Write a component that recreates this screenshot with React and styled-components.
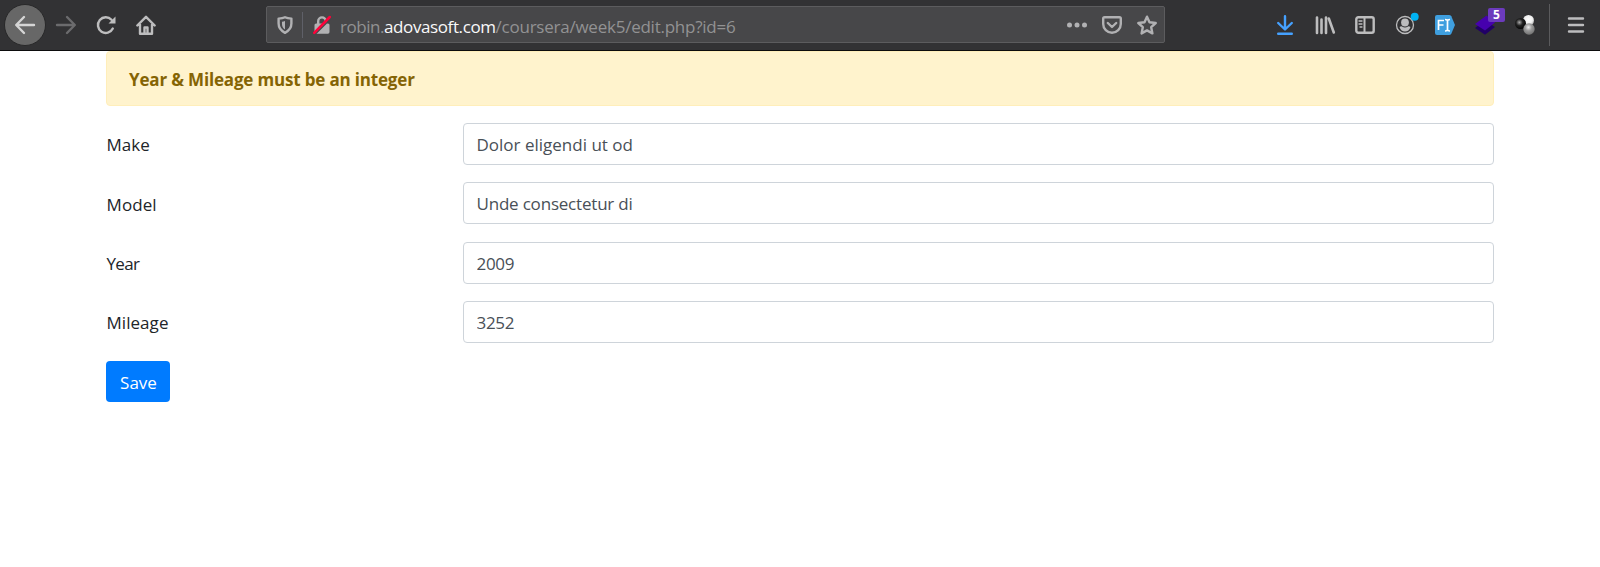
import React from "react";
import styled, { createGlobalStyle } from "styled-components";

const GlobalStyle = createGlobalStyle`
  *, *::before, *::after { box-sizing: border-box; }
  body {
    margin: 0;
    background: #fff;
    color: #212529;
    font-family: "Open Sans", "Noto Sans", sans-serif;
    font-size: 17px;
    line-height: 26px;
    overflow: hidden;
  }
`;

const Toolbar = styled.header`
  display: flex;
  align-items: center;
  height: 51px;
  padding: 0 0 1px 4px;
  background: #323234;
  border-bottom: 1px solid #0c0c0d;
`;

const ToolButton = styled.button`
  position: relative;
  display: flex;
  align-items: center;
  justify-content: center;
  flex: none;
  width: 40px;
  height: 40px;
  padding: 0;
  border: 0;
  background: none;
  color: ${(p) => p.$color || "#bdbdbe"};
  svg { display: block; overflow: visible; }
`;

const BackButton = styled(ToolButton)`
  width: 42px;
  height: 42px;
  border: 1px solid #282829;
  border-radius: 50%;
  background: #676767;
  color: #d5d5d5;
`;

const UrlBar = styled.div`
  display: flex;
  align-items: center;
  width: 899px;
  height: 37px;
  margin: 0 100px;
  padding: 0 7px 0 8px;
  border: 1px solid #5c5c5e;
  border-radius: 2px;
  background: #474749;
  color: #b1b1b3;
  svg { display: block; flex: none; }
`;

const UrlDivider = styled.span`
  width: 1px;
  height: 26px;
  margin: 0 9px 0 7px;
  background: #5f6068;
`;

const Url = styled.div`
  display: flex;
  flex: 1;
  margin: 5px 0 0 8px;
  color: #929293;
  line-height: 24px;
  white-space: pre;
`;

const Text = styled.span`
  display: inline-block;
  letter-spacing: ${(p) => p.$track || 0}px;
`;

const Host = styled(Text)`
  color: #f9f9fa;
`;

const UrlActions = styled.div`
  display: flex;
  gap: 15px;
`;

const Badge = styled.span`
  position: absolute;
  top: 3px;
  left: 23px;
  width: 17px;
  height: 14px;
  border-radius: 2px;
  background: #6c3bbd;
  color: #fff;
  font: bold 12px/14px "Open Sans", sans-serif;
  text-align: center;
`;

const Separator = styled.span`
  width: 1px;
  height: 42px;
  margin: 0 6px 0 4px;
  background: #5b5b5d;
`;

const Page = styled.main`
  padding: 0 106px;
`;

const Alert = styled.div`
  height: 55px;
  margin-bottom: 17px;
  padding: 15px 22px 12px;
  border: 1px solid #ffeeba;
  border-radius: 4px;
  background: #fff3cd;
  color: #856404;
  font-weight: 700;
`;

const Row = styled.div`
  display: grid;
  grid-template-columns: 357px 1fr;
  height: 42px;
  margin-bottom: 17.4px;
`;

const Label = styled.label`
  padding: 9.3px 0 0 0.5px;
`;

const Field = styled.input`
  width: 100%;
  height: 42px;
  padding: 0.6px 13px 0 12.5px;
  border: 1px solid #ced4da;
  border-radius: 4px;
  background: #fff;
  color: #495057;
  font: inherit;
  letter-spacing: ${(p) => p.$track || 0}px;
  outline: 0;
`;

const SaveButton = styled.button`
  display: block;
  width: 64px;
  height: 41px;
  padding: 3px 0 0 1px;
  border: 0;
  border-radius: 4px;
  background: #007bff;
  color: #fff;
  font: inherit;
`;

function Icon({ size = 20, children, w = 2.4 }) {
  return (
    <svg width={size} height={size} viewBox="0 0 20 20" fill="none" stroke="currentColor" strokeWidth={w} strokeLinecap="round" strokeLinejoin="round">
      {children}
    </svg>
  );
}

const ShieldIcon = () => (
  <Icon>
    <path d="M10 2.200c2 1 4.300 1.300 6.400 1.400v5c0 4.200-2.500 7.300-6.400 9.200-3.900-1.900-6.400-5-6.400-9.200v-5C5.700 3.500 8 3.200 10 2.200z" />
    <path d="M10 6c-1 .4-1.800.6-3 .7v2.500c0 2.200 1 4 3 5.200z" fill="currentColor" stroke="none" />
  </Icon>
);

const LockIcon = () => (
  <Icon>
    <path d="M6.200 9V6.200a3.800 3.800 0 0 1 7.600 0V9" />
    <rect x="2.500" y="8.500" width="15" height="10.200" rx="1.600" fill="currentColor" stroke="none" />
    <path d="M3.600 18.800L19.200 3.200" stroke="#474749" strokeWidth="1.600" />
    <path d="M2.200 17.800L17.800 2" stroke="#ff0039" strokeWidth="2.500" />
  </Icon>
);

const StackIcon = () => (
  <svg width="20" height="20" viewBox="0 0 20 20">
    <path d="M0 13L10 5.500 20 12 10 19.800z" fill="#210066" />
    <path d="M0 9L11.500.5 20 7.500 10 15.500z" fill="#4600ae" />
  </svg>
);

const BallsIcon = () => (
  <svg width="22" height="22" viewBox="0 0 22 22">
    <defs>
      <radialGradient id="dark" cx=".4" cy=".4" r=".6"><stop offset="0" stopColor="#aaa" /><stop offset=".5" stopColor="#222" /><stop offset="1" stopColor="#050505" /></radialGradient>
      <radialGradient id="light" cx=".5" cy=".4" r=".6"><stop offset="0" stopColor="#fff" /><stop offset=".6" stopColor="#f1f1f1" /><stop offset="1" stopColor="#aaa" /></radialGradient>
      <radialGradient id="gray" cx=".45" cy=".35" r=".6"><stop offset="0" stopColor="#eee" /><stop offset=".5" stopColor="#999" /><stop offset="1" stopColor="#777" /></radialGradient>
    </defs>
    <circle cx="14.500" cy="6.500" r="5.500" fill="url(#light)" />
    <circle cx="6.500" cy="9.500" r="5.500" fill="url(#dark)" />
    <circle cx="15" cy="15" r="5.700" fill="url(#gray)" />
  </svg>
);

const rows = [
  { name: "Make", value: "Dolor eligendi ut od" },
  { name: "Model", value: "Unde consectetur di", labelTrack: 0.1, track: -0.2 },
  { name: "Year", value: "2009", labelTrack: -0.7, track: -0.3 },
  { name: "Mileage", value: "3252", labelTrack: 0.05, track: -0.3 },
];

export default function App() {
  return (
    <>
      <GlobalStyle />
      <Toolbar>
        <BackButton><Icon><path d="M19 10H1.500M9 2L1.200 10 9 18" /></Icon></BackButton>
        <ToolButton $color="#6b6b6d"><Icon><path d="M1 10H18.500M11 2L18.800 10 11 18" /></Icon></ToolButton>
        <ToolButton><Icon><path d="M16.800 13.500A7.800 7.800 0 1 1 15.500 4.800" /><path d="M19.500 1.500V8.500H12.500z" fill="currentColor" stroke="none" /></Icon></ToolButton>
        <ToolButton><Icon><path d="M1.300 10.500L10 1.800l8.700 8.700M4 9.500V18.700H16V9.500M8.500 18v-5.500h3V18" /></Icon></ToolButton>
        <UrlBar>
          <ShieldIcon /><UrlDivider /><LockIcon />
          <Url>
            <Text $track={-0.45}>robin.</Text>
            <Host $track={-0.4}>adovasoft.com</Host>
            <Text $track={-0.24}>/coursera/week5/edit.php?id=6</Text>
          </Url>
          <UrlActions>
            <Icon><g fill="currentColor" stroke="none"><circle cx="2.500" cy="10" r="2.500" /><circle cx="10" cy="10" r="2.500" /><circle cx="17.500" cy="10" r="2.500" /></g></Icon>
            <Icon><path d="M2.500 2.200H17.500Q18.800 2.200 18.800 3.500V9a8.800 8.800 0 0 1-17.600 0V3.500Q1.200 2.200 2.500 2.200zM5.800 8l4.200 4 4.200-4" /></Icon>
            <Icon><path d="M10 1.700l2.500 5.600 6.200.7-4.500 4.200 1.200 6.200-5.400-3-5.400 3 1.200-6.200L1.300 8l6.200-.7z" /></Icon>
          </UrlActions>
        </UrlBar>
        <ToolButton $color="#45a1ff"><Icon><path d="M10 1.200V14M3.200 8L10 14.500 16.800 8M3.200 18.800H16.800" /></Icon></ToolButton>
        <ToolButton><Icon w={2.600}><path d="M2 2.500V18M6.500 4.500V18M11 2.500V18M13.800 3.500L18.800 17.500" /></Icon></ToolButton>
        <ToolButton><Icon><rect x="1.300" y="2.200" width="17.400" height="15.600" rx="2" /><path d="M9.500 2.500V17.500" strokeWidth="2" /><path d="M4 6H7M4 9H7M5 12H7" strokeWidth="1.300" /></Icon></ToolButton>
        <ToolButton>
          <svg width="26" height="26" viewBox="0 0 26 26"><circle cx="13" cy="13" r="8.500" fill="none" stroke="currentColor" strokeWidth="1.300" /><circle cx="13" cy="10.500" r="3.900" fill="currentColor" /><path d="M7.500 15Q9 14 10 14.500Q13 16.500 16 14.500Q17 14 18.500 15Q17 19.500 13 19.500T7.500 15z" fill="currentColor" /><circle cx="22.700" cy="4.700" r="4" fill="#00b3f4" /></svg>
        </ToolButton>
        <ToolButton>
          <svg width="20" height="20" viewBox="0 0 20 20"><path d="M2 0H14Q15.500 0 16.300 1.300L20 10 16.300 18.700Q15.500 20 14 20H2Q0 20 0 18V2Q0 0 2 0z" fill="#3f9fdf" /><path d="M3.500 15V5.500H9M3.500 10H8.500M10 4.500Q12.300 4.500 12.500 6Q12.700 4.500 15 4.500M10 16Q12.300 16 12.500 14.500Q12.700 16 15 16M12.500 5.500V15" fill="none" stroke="#fff" strokeWidth="1.700" /></svg>
        </ToolButton>
        <ToolButton><StackIcon /><Badge>5</Badge></ToolButton>
        <ToolButton><BallsIcon /></ToolButton>
        <Separator />
        <ToolButton><Icon><path d="M3 3.500H17M3 10H17M3 16.500H17" /></Icon></ToolButton>
      </Toolbar>
      <Page>
        <Alert><Text $track={-0.17}>Year &amp; Mileage must be an integer</Text></Alert>
        {rows.map(({ name, value, labelTrack, track }) => (
          <Row key={name}>
            <Label htmlFor={name}><Text $track={labelTrack}>{name}</Text></Label>
            <Field id={name} defaultValue={value} $track={track} />
          </Row>
        ))}
        <SaveButton>Save</SaveButton>
      </Page>
    </>
  );
}
